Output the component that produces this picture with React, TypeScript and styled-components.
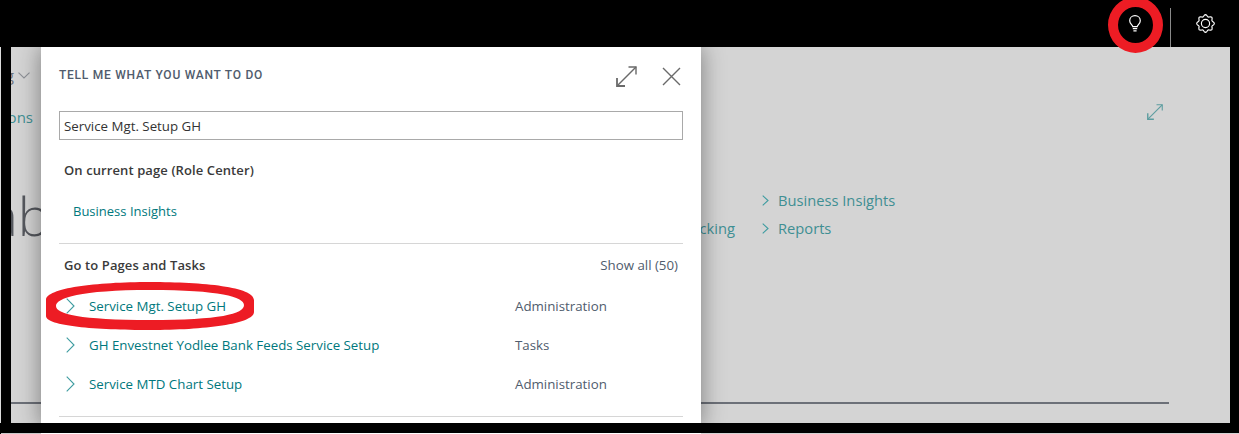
import React from "react";
import styled, { createGlobalStyle } from "styled-components";

const GlobalStyle = createGlobalStyle`
  html, body {
    margin: 0;
    padding: 0;
    background: #000;
    overflow: hidden;
  }
`;

const FONT = `"Open Sans", "Noto Sans", sans-serif`;

const Frame = styled.div`
  position: relative;
  width: 1239px;
  height: 434px;
  overflow: hidden;
  background: #000;
  font-family: ${FONT};
  font-size: 13.3px;
`;

const TopBar = styled.header`
  height: 47px;
  background: #000;
  display: flex;
  justify-content: flex-end;
  color: #fff;
`;

const BarButton = styled.div`
  width: 70px;
  display: flex;
  align-items: center;
  justify-content: center;
  padding-bottom: 1px;
  box-sizing: border-box;
`;

const GearButton = styled(BarButton)`
  margin-right: -1px;
  padding-bottom: 0;
  position: relative;
  &::before {
    content: "";
    position: absolute;
    left: 0;
    top: 8px;
    bottom: 0;
    width: 1px;
    background: #8a8a8a;
  }
`;

const Middle = styled.div`
  height: 376px;
  display: flex;
`;

const Sliver = styled.div`
  width: 1px;
  background: #dcdcdc;
`;

const Edge = styled.div<{ $w: number }>`
  width: ${(p) => p.$w}px;
  background: #000;
`;

const Page = styled.main`
  position: relative;
  flex: 1;
  background: #d4d4d4;
  overflow: hidden;
  display: flex;
  flex-direction: column;
`;

const PageBody = styled.div`
  height: 355px;
  display: flex;
`;

const LeftStub = styled.div`
  width: 30px;
  display: flex;
  flex-direction: column;
  align-items: flex-end;
  white-space: nowrap;
`;

const Crumb = styled.div`
  height: 20px;
  margin-top: 18px;
  padding-right: 11px;
  display: flex;
  align-items: center;
  gap: 4px;
  color: #6c7078;
  font-size: 15px;
`;

const StubAction = styled.div`
  margin-top: 22px;
  margin-right: 8px;
  height: 20px;
  line-height: 20px;
  color: #3f8f93;
  font-size: 15px;
`;

const BigTitle = styled.div`
  margin-top: 58px;
  height: 60px;
  line-height: 60px;
  margin-right: -9px;
  font-weight: 300;
  font-size: 54px;
  color: #55585e;
`;

const PageMain = styled.div`
  flex: 1;
  display: flex;
  flex-direction: column;
`;

const ExpandRow = styled.div`
  height: 20px;
  margin-top: 55px;
  display: flex;
  justify-content: flex-end;
  align-items: center;
  padding-right: 67px;
  color: #5b9c9f;
`;

const LinkGrid = styled.div`
  margin-top: 64px;
  display: grid;
  grid-template-columns: 694px 1fr;
  grid-auto-rows: 28px;
  column-gap: 27px;
  align-items: center;
`;

const DimLink = styled.div<{ $end?: boolean }>`
  color: #3f8f93;
  font-size: 14.7px;
  display: flex;
  align-items: center;
  gap: 9px;
  justify-content: ${(p) => (p.$end ? "flex-end" : "flex-start")};
`;

const PageRule = styled.div`
  height: 2px;
  margin-right: 61px;
  background: #6c7078;
`;

const Dialog = styled.section`
  position: absolute;
  left: 30px;
  top: 0;
  bottom: -4px;
  width: 660px;
  box-sizing: border-box;
  padding: 0 18px;
  background: #fff;
  box-shadow: 0 0 22px rgba(0, 0, 0, 0.42);
  display: flex;
  flex-direction: column;
`;

const DialogHead = styled.div`
  height: 54px;
  display: flex;
  align-items: center;
  justify-content: space-between;
`;

const DialogTitle = styled.h2`
  margin: 2px 0 0;
  font-family: Roboto, sans-serif;
  font-weight: 500;
  font-size: 12px;
  letter-spacing: 0.75px;
  color: #505c6d;
`;

const HeadIcons = styled.div`
  display: flex;
  align-items: center;
  gap: 25px;
  margin-right: 2px;
  padding-top: 5px;
  color: #6a6a6a;
`;

const SearchBox = styled.div`
  margin-top: 10px;
  height: 29px;
  box-sizing: border-box;
  border: 1px solid #a9a9a9;
  padding: 0 4px;
  display: flex;
  align-items: center;
  color: #333;
`;

const SectionHead = styled.div<{ $gap: number }>`
  margin-top: ${(p) => p.$gap}px;
  height: 28px;
  padding: 0 5px;
  display: flex;
  align-items: center;
  justify-content: space-between;
  font-size: 13px;
  font-weight: 600;
  letter-spacing: 0.1px;
  color: #3a3a3a;
`;

const ShowAll = styled.span`
  font-size: 13.3px;
  font-weight: 400;
  letter-spacing: 0;
  color: #505c6d;
`;

const PlainLink = styled.a`
  margin-top: 13px;
  height: 28px;
  padding-left: 14px;
  display: flex;
  align-items: center;
  color: #00787d;
  font-size: 13px;
`;

const Divider = styled.hr<{ $gap: number }>`
  margin: ${(p) => p.$gap}px 0 0;
  border: 0;
  height: 1px;
  flex: none;
  background: #d6d6d6;
`;

const ResultList = styled.ul`
  list-style: none;
  margin: 7px 0 1px;
  padding: 0;
`;

const ResultRow = styled.li`
  height: 39px;
  display: grid;
  grid-template-columns: 449px 1fr;
  align-items: center;
  padding-left: 7px;
`;

const ResultName = styled.a`
  display: flex;
  align-items: center;
  gap: 14px;
  color: #00787d;
`;

const ResultKind = styled.span`
  color: #505c6d;
`;

const BottomEdge = styled.div`
  height: 10px;
  background: #000;
`;

const Remnant = styled.div`
  height: 1px;
  display: flex;
  overflow: hidden;
  background: #000;
`;

const RemnantPage = styled.div`
  width: 40px;
  margin-left: 1px;
  background: #c9c9c9;
`;

const RemnantDialog = styled.div`
  width: 660px;
  box-sizing: border-box;
  padding: 0 23px;
  background: #fff;
  display: flex;
  justify-content: space-between;
  font-weight: 600;
  color: #333;
  line-height: 13px;
  height: 1px;
  align-items: flex-start;
`;

const RemnantFill = styled.div`
  flex: 1;
  background: #d4d4d4;
`;

const Ring = styled.div`
  position: absolute;
  left: 1108px;
  top: -3px;
  width: 55px;
  height: 56px;
  box-sizing: border-box;
  border: 10px solid #ed1c24;
  border-radius: 50%;
`;

const RowMark = styled.svg`
  position: absolute;
  left: 46px;
  top: 282px;
`;

const Chevron = ({ size = 9, h = 16 }: { size?: number; h?: number }) => (
  <svg width={size} height={h} viewBox={`0 0 ${size} ${h}`} fill="none" stroke="#3e9ca0" strokeWidth="1.1">
    <path d={`M0.7 0.7 L${size - 1} ${h / 2} L0.7 ${h - 0.7}`} />
  </svg>
);

const ExpandIcon = ({ size = 21 }: { size?: number }) => (
  <svg width={size} height={size} viewBox="0 0 21 21" fill="none" stroke="currentColor" strokeWidth="1.4">
    <path d="M1.5 19.5 L20 1" />
    <path d="M12.5 1 H20 V8.5" />
    <path d="M1 12 V20 H9" strokeWidth="1.8" />
  </svg>
);

const CloseIcon = () => (
  <svg width="19" height="19" viewBox="0 0 19 19" fill="none" stroke="currentColor" strokeWidth="1.4">
    <path d="M1 1 L18 18 M18 1 L1 18" />
  </svg>
);

const BulbIcon = () => (
  <svg width="12" height="17" viewBox="0 0 12 17" fill="none" stroke="#fff" strokeWidth="1.2">
    <path d="M3.8 11.6 C3.6 9.8 0.7 8.8 0.7 5.7 C0.7 2.8 3 0.7 6 0.7 C9 0.7 11.3 2.8 11.3 5.7 C11.3 8.8 8.4 9.8 8.2 11.6 Z" />
    <path d="M3.8 13.6 H8.2 M4.4 15.8 H7.6" />
  </svg>
);

// eight soft lobes round a ring
const gearOutline = Array.from({ length: 96 }, (_, i) => {
  const a = (i / 96) * Math.PI * 2;
  const r = 7.9 + 0.9 * Math.cos(8 * a);
  return `${(9.5 + r * Math.cos(a)).toFixed(2)} ${(9.5 + r * Math.sin(a)).toFixed(2)}`;
}).join(" L");

const GearIcon = () => (
  <svg width="19" height="19" viewBox="0 0 19 19" fill="none" stroke="#fff" strokeWidth="1.15">
    <path d={`M${gearOutline} Z`} />
    <circle cx="9.5" cy="9.5" r="4.1" />
  </svg>
);

const SmallDown = () => (
  <svg width="12" height="7" viewBox="0 0 12 7" fill="none" stroke="#8d9096" strokeWidth="1.1">
    <path d="M0.5 0.7 L6 6 L11.5 0.7" />
  </svg>
);

const results = [
  { name: "Service Mgt. Setup GH", kind: "Administration" },
  { name: "GH Envestnet Yodlee Bank Feeds Service Setup", kind: "Tasks" },
  { name: "Service MTD Chart Setup", kind: "Administration" },
];

export default function App() {
  return (
    <>
      <GlobalStyle />
      <Frame>
        <TopBar>
          <BarButton>
            <BulbIcon />
          </BarButton>
          <GearButton>
            <GearIcon />
          </GearButton>
        </TopBar>
        <Middle>
          <Sliver />
          <Edge $w={10} />
          <Page>
            <PageBody>
              <LeftStub>
                <Crumb>
                  Setting
                  <SmallDown />
                </Crumb>
                <StubAction>Actions</StubAction>
                <BigTitle>Tab</BigTitle>
              </LeftStub>
              <PageMain>
                <ExpandRow>
                  <ExpandIcon size={16} />
                </ExpandRow>
                <LinkGrid>
                  <span />
                  <DimLink>
                    <Chevron size={7} h={11} />
                    Business Insights
                  </DimLink>
                  <DimLink $end>Tracking</DimLink>
                  <DimLink>
                    <Chevron size={7} h={11} />
                    Reports
                  </DimLink>
                </LinkGrid>
              </PageMain>
            </PageBody>
            <PageRule />
            <Dialog>
              <DialogHead>
                <DialogTitle>TELL ME WHAT YOU WANT TO DO</DialogTitle>
                <HeadIcons>
                  <ExpandIcon />
                  <CloseIcon />
                </HeadIcons>
              </DialogHead>
              <SearchBox>Service Mgt. Setup GH</SearchBox>
              <SectionHead $gap={16}>On current page (Role Center)</SectionHead>
              <PlainLink>Business Insights</PlainLink>
              <Divider $gap={18} />
              <SectionHead $gap={7}>
                Go to Pages and Tasks
                <ShowAll>Show all (50)</ShowAll>
              </SectionHead>
              <ResultList>
                {results.map((r) => (
                  <ResultRow key={r.name}>
                    <ResultName>
                      <Chevron />
                      {r.name}
                    </ResultName>
                    <ResultKind>{r.kind}</ResultKind>
                  </ResultRow>
                ))}
              </ResultList>
              <Divider $gap={12} />
            </Dialog>
          </Page>
          <Edge $w={9} />
        </Middle>
        <BottomEdge />
        <Remnant>
          <RemnantPage />
          <RemnantDialog>
            <span>Search in company data</span>
            <ShowAll>Show all (50)</ShowAll>
          </RemnantDialog>
          <RemnantFill />
        </Remnant>
        <Ring />
        <RowMark width="208" height="48" viewBox="0 0 208 48">
          <path
            fillRule="evenodd"
            fill="#ed1c24"
            d="M0 18 C0 6 50 0 104 0 C158 0 208 5 208 18 L208 30 C208 42 158 48 104 48 C50 48 0 44 0 34 Z
               M10 24 C10 16 34 8 104 8 C174 8 198 15 198 23 C198 32 174 38 104 38 C34 38 10 32 10 24 Z"
          />
        </RowMark>
      </Frame>
    </>
  );
}
